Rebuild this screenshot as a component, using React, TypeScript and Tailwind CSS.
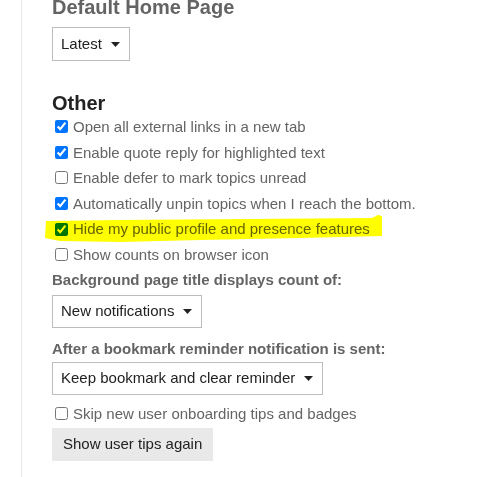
import React from "react";

const Caret = () => (
  <svg width="9" height="5" viewBox="0 0 9 5" className="shrink-0">
    <polygon points="0,0 9,0 4.5,5" fill="#222222" />
  </svg>
);

function Select({ label, width }: { label: string; width: string }) {
  return (
    <div
      className={`flex h-[33px] ${width} items-center gap-[9px] border border-[#bcbcbc] bg-white pl-[8px] text-[15px] text-[#222222]`}
    >
      <span>{label}</span>
      <Caret />
    </div>
  );
}

function Check({ label, checked }: { label: string; checked?: boolean }) {
  return (
    <label className="flex h-[25.6px] items-center text-[15px] leading-[25.6px] text-[#646464]">
      <input
        type="checkbox"
        defaultChecked={checked}
        className="m-0 ml-[3px] mr-[5px] h-[13px] w-[13px]"
      />
      <span>{label}</span>
    </label>
  );
}

export default function App() {
  return (
    <div
      className="relative h-[477px] w-[488px] overflow-hidden bg-white"
      style={{ fontFamily: '"Liberation Sans", Arial, sans-serif' }}
    >
      <div className="ml-[21px] flow-root h-full border-l border-[#e6e6e6] pl-[30px]">
        <h2 className="-mt-[4px] text-[20px] font-bold leading-[23px] text-[#646464]">
          Default Home Page
        </h2>
        <div className="mt-[8px]">
          <div className="flex h-[34px] w-[78px] items-center gap-[9px] border border-[#bcbcbc] pl-[8px] text-[15px] text-[#222222]">
            <span>Latest</span>
            <Caret />
          </div>
        </div>
        <h2 className="mt-[31px] text-[20px] font-bold leading-[22px] text-[#222222]">Other</h2>
        <div className="flex flex-col">
          <Check label="Open all external links in a new tab" checked />
          <Check label="Enable quote reply for highlighted text" checked />
          <Check label="Enable defer to mark topics unread" />
          <Check label="Automatically unpin topics when I reach the bottom." checked />
          <Check label="Hide my public profile and presence features" checked />
          <Check label="Show counts on browser icon" />
        </div>
        <div className="mt-[2px] text-[15px] font-bold leading-[20px] text-[#646464]">
          Background page title displays count of:
        </div>
        <div className="mt-[5px]">
          <Select label="New notifications" width="w-[150px]" />
        </div>
        <div className="mt-[11px] text-[15px] font-bold leading-[20px] text-[#646464]">
          After a bookmark reminder notification is sent:
        </div>
        <div className="mt-[3px]">
          <Select label="Keep bookmark and clear reminder" width="w-[271px]" />
        </div>
        <div className="mt-[6px]">
          <Check label="Skip new user onboarding tips and badges" />
        </div>
        <button className="mt-[2px] h-[33px] w-[161px] bg-[#e9e9e9] pl-[11px] text-left text-[15px] text-[#222222]">
          Show user tips again
        </button>
      </div>
      <svg
        className="pointer-events-none absolute left-0 top-0 mix-blend-multiply"
        width="488"
        height="477"
        viewBox="0 0 488 477"
      >
        <polygon
          points="46,221 120,220 250,219 372,218 378,215 382,216 382,236 300,238 200,240 120,242 60,241 45,238"
          fill="#ffff00"
        />
      </svg>
    </div>
  );
}
